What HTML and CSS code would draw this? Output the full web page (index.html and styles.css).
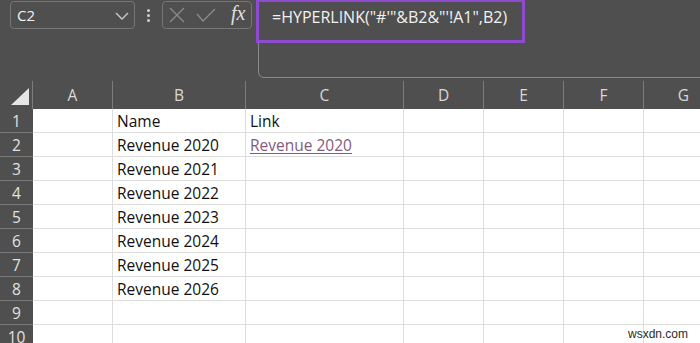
FILE: index.html
```html
<!DOCTYPE html>
<html>
<head>
<meta charset="utf-8">
<link rel="stylesheet" href="styles.css">
</head>
<body>
<div class="app">
  <div class="topbar">
    <div class="namebox">
      <span class="ref">C2</span>
      <svg class="chev" width="14" height="8" viewBox="0 0 14 8"><path d="M1 1 L7 7 L13 1" fill="none" stroke="#c8c8c8" stroke-width="1.4"/></svg>
    </div>
    <div class="dots"><i></i><i></i><i></i></div>
    <div class="fxbox">
      <svg width="16" height="16" viewBox="0 0 16 16"><path d="M1 1 L15 15 M15 1 L1 15" stroke="#8c8c8c" stroke-width="1.3" fill="none"/></svg>
      <svg width="20" height="14" viewBox="0 0 20 14"><path d="M1 6 L7 13 L19 1" stroke="#8c8c8c" stroke-width="1.3" fill="none"/></svg>
      <span class="fx">fx</span>
    </div>
    <div class="formula">
      <div class="ftext">=HYPERLINK("#'"&amp;B2&amp;"'!A1",B2)</div>
      <div class="highlight"></div>
    </div>
  </div>
  <div class="sheet">
    <div class="ch corner"><span class="tri"></span></div>
    <div class="ch">A</div><div class="ch">B</div><div class="ch">C</div><div class="ch">D</div><div class="ch">E</div><div class="ch">F</div><div class="ch">G</div>

    <div class="rh">1</div><div class="c"></div><div class="c">Name</div><div class="c">Link</div><div class="c"></div><div class="c"></div><div class="c"></div><div class="c"></div>
    <div class="rh">2</div><div class="c"></div><div class="c">Revenue 2020</div><div class="c"><span class="link">Revenue 2020</span></div><div class="c"></div><div class="c"></div><div class="c"></div><div class="c"></div>
    <div class="rh">3</div><div class="c"></div><div class="c">Revenue 2021</div><div class="c"></div><div class="c"></div><div class="c"></div><div class="c"></div><div class="c"></div>
    <div class="rh">4</div><div class="c"></div><div class="c">Revenue 2022</div><div class="c"></div><div class="c"></div><div class="c"></div><div class="c"></div><div class="c"></div>
    <div class="rh">5</div><div class="c"></div><div class="c">Revenue 2023</div><div class="c"></div><div class="c"></div><div class="c"></div><div class="c"></div><div class="c"></div>
    <div class="rh">6</div><div class="c"></div><div class="c">Revenue 2024</div><div class="c"></div><div class="c"></div><div class="c"></div><div class="c"></div><div class="c"></div>
    <div class="rh">7</div><div class="c"></div><div class="c">Revenue 2025</div><div class="c"></div><div class="c"></div><div class="c"></div><div class="c"></div><div class="c"></div>
    <div class="rh">8</div><div class="c"></div><div class="c">Revenue 2026</div><div class="c"></div><div class="c"></div><div class="c"></div><div class="c"></div><div class="c"></div>
    <div class="rh">9</div><div class="c"></div><div class="c"></div><div class="c"></div><div class="c"></div><div class="c"></div><div class="c"></div><div class="c"></div>
    <div class="rh">10</div><div class="c"></div><div class="c"></div><div class="c"></div><div class="c"></div><div class="c"></div><div class="c"></div><div class="c"></div>
  </div>
  <div class="watermark">wsxdn.com</div>
</div>
</body>
</html>
```

FILE: styles.css
```css
html, body {
  margin: 0;
  padding: 0;
  background: #4f4f4f;
  overflow: hidden;
}
.app {
  position: relative;
  width: 700px;
  height: 343px;
  overflow: hidden;
  font-family: "Open Sans", "Noto Sans", sans-serif;
}
.topbar {
  display: flex;
  align-items: flex-start;
  height: 81px;
  padding: 1px 0 0 10px;
  box-sizing: border-box;
}
.namebox {
  width: 125px;
  height: 28px;
  box-sizing: border-box;
  border: 1px solid #767676;
  border-radius: 4px;
  display: flex;
  align-items: center;
  justify-content: space-between;
  padding: 0 5px 0 6px;
}
.ref {
  color: #f2f2f2;
  font-size: 15px;
}
.chev { margin-top: 1px; }
.dots {
  width: 27px;
  height: 28px;
  display: flex;
  flex-direction: column;
  align-items: center;
  justify-content: center;
  gap: 2px;
}
.dots i {
  display: block;
  width: 3px;
  height: 3px;
  border-radius: 50%;
  background: #d0d0d0;
}
.fxbox {
  width: 90px;
  height: 28px;
  box-sizing: border-box;
  border: 1px solid #767676;
  border-radius: 4px;
  display: flex;
  align-items: center;
  padding: 0 5px 0 6px;
  gap: 11px;
}
.fx {
  font-family: "Liberation Serif", serif;
  font-style: italic;
  font-size: 20px;
  color: #e0e0e0;
  margin-left: 4px;
  margin-top: -3px;
}
.formula {
  position: relative;
  flex: 1;
  margin-left: 6px;
  margin-top: -10px;
  margin-right: -10px;
  height: 87px;
  box-sizing: border-box;
  border: 1px solid #8a8a8a;
  border-radius: 0 0 0 6px;
}
.ftext {
  color: #f2f2f2;
  font-size: 16px;
  padding: 14px 0 0 13px;
  white-space: nowrap;
}
.highlight {
  position: absolute;
  left: -3px;
  top: 7px;
  width: 269px;
  height: 44px;
  box-sizing: border-box;
  border: 3px solid #8e4bd0;
}
.sheet {
  display: grid;
  grid-template-columns: 33px 80px 133px 158px 80px 80px 80px 80px;
  grid-template-rows: 28px;
  grid-auto-rows: 24px;
  background: #fff;
}
.ch {
  background: #4f4f4f;
  color: #d9d9d9;
  font-size: 15.5px;
  display: flex;
  align-items: center;
  justify-content: center;
  border-right: 1px solid #7c7c7c;
  box-sizing: border-box;
}
.corner {
  position: relative;
  justify-content: flex-end;
  align-items: flex-end;
  padding: 0 3px 4px 0;
}
.tri {
  display: block;
  width: 18px;
  height: 17px;
  background: #e6e6e6;
  clip-path: polygon(100% 0, 100% 100%, 0 100%);
}
.rh {
  background: #4f4f4f;
  color: #e2e2e2;
  font-size: 15.5px;
  display: flex;
  align-items: center;
  justify-content: center;
  border-bottom: 1px solid #7a7a7a;
  box-sizing: border-box;
}
.c {
  background: #fff;
  border-right: 1px solid #dddddd;
  border-bottom: 1px solid #dddddd;
  box-sizing: border-box;
  color: #111;
  font-size: 15.5px;
  display: flex;
  align-items: center;
  padding-left: 4px;
  white-space: nowrap;
  overflow: hidden;
}
.link {
  color: #835a7d;
  text-decoration: underline;
  text-underline-offset: 2px;
}
.watermark {
  position: absolute;
  right: 12px;
  bottom: 2px;
  font-family: "Liberation Sans", Arial, sans-serif;
  font-size: 12px;
  color: #2a2a2a;
}
```
